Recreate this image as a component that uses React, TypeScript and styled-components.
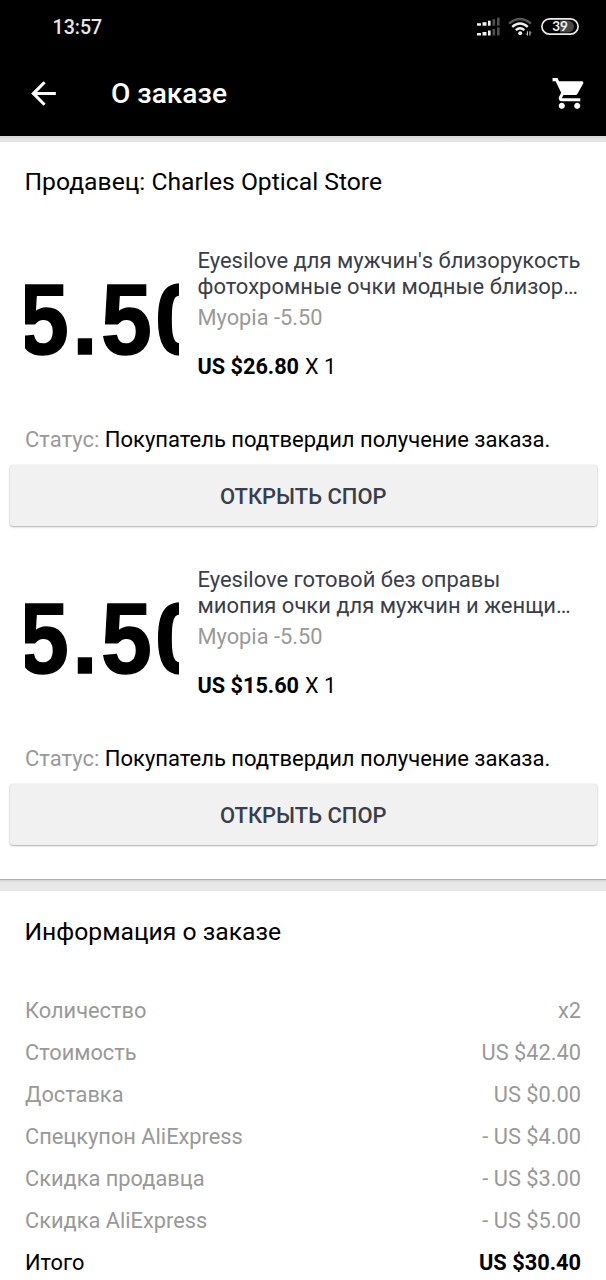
import React from 'react';
import styled, { createGlobalStyle } from 'styled-components';

const GlobalStyle = createGlobalStyle`
  *, *::before, *::after { box-sizing: border-box; }
  body {
    margin: 0;
    background: #fff;
    color: #000;
    font-family: Roboto, sans-serif;
    overflow: hidden;
  }
`;

const Screen = styled.div`
  width: 606px;
  height: 1280px;
  display: flex;
  flex-direction: column;
  overflow: hidden;
  background: #fff;
`;

const StatusBar = styled.div`
  display: flex;
  align-items: center;
  height: 54px;
  flex: none;
  padding: 0 27px 0 52.5px;
  background: #000;
`;

const Clock = styled.span`
  flex: 1;
  padding-top: 2px;
  color: #e6e6e6;
  font-size: 19.6px;
  font-weight: 500;
  line-height: 52px;
`;

const StatusIcons = styled.svg`
  display: block;
`;

const Toolbar = styled.header`
  display: flex;
  align-items: center;
  height: 82px;
  flex: none;
  padding: 0 18px 4px 25px;
  background: #000;
`;

const Title = styled.h1`
  flex: 1;
  margin: 2px 0 0 49px;
  color: #fff;
  font-size: 28.1px;
  font-weight: 500;
  line-height: 40px;
`;

const IconButton = styled.button`
  display: flex;
  padding: 0;
  border: 0;
  background: none;
  color: #fff;
`;

const TopStrip = styled.div`
  height: 6px;
  flex: none;
  background: linear-gradient(#d6d6d6, #e4e4e4 60%);
`;

const Divider = styled.div`
  height: 12px;
  flex: none;
  border-top: 1px solid #aeaeae;
  background: linear-gradient(#d6d6d6, #e8e8e8 3px);
`;

const Section = styled.section<{ $bottom?: number }>`
  flex: none;
  padding-bottom: ${(p) => p.$bottom ?? 0}px;
`;

const Heading = styled.h2<{ $height: number }>`
  margin: 0;
  padding: 0 24.5px;
  font-size: 24.7px;
  font-weight: 400;
  line-height: ${(p) => p.$height}px;
`;

const Item = styled.article`
  display: flex;
  flex-direction: column;
  height: 319px;
  padding-top: 20px;
`;

const Product = styled.div`
  display: flex;
  gap: 18.5px;
  height: 154px;
  padding-left: 25px;
`;

const Thumb = styled.div`
  width: 154px;
  height: 154px;
  flex: none;
  overflow: hidden;
  font-family: "Liberation Sans", Arial, sans-serif;
  font-size: 101px;
  font-weight: 700;
  line-height: 155px;
  white-space: nowrap;
`;

const ThumbText = styled.span`
  display: block;
  margin-left: -7px;
  letter-spacing: 3.7px;
  -webkit-text-stroke: 1.5px #000;
  transform: scaleX(0.905);
  transform-origin: 0 50%;
`;

const Details = styled.div`
  display: flex;
  flex-direction: column;
  flex: 1;
  padding-top: 6px;
  font-size: 21.97px;
`;

const Name = styled.div`
  color: #3a3e4a;
  line-height: 26px;
  white-space: pre;
`;

const Variant = styled.div`
  margin-top: 3px;
  color: #999;
  font-size: 21.8px;
  line-height: 30px;
`;

const Price = styled.div`
  display: flex;
  gap: 6px;
  margin-top: 19px;
  font-size: 21.7px;
  line-height: 30px;

  b { font-weight: 700; }
`;

const Status = styled.div`
  margin-top: 28px;
  padding: 0 25px;
  font-size: 22px;
  line-height: 31px;
  white-space: nowrap;

  span { color: #999; }
`;

const DisputeButton = styled.button`
  height: 61px;
  margin: 10px 9px 0 9.5px;
  padding: 2px 0 0;
  border: 0;
  border-radius: 3px;
  background: #f1f1f1;
  box-shadow: 0 1px 2px rgba(0, 0, 0, 0.3), 0 0 2px rgba(0, 0, 0, 0.1);
  color: #3a3e4a;
  font-family: inherit;
  font-size: 21.95px;
  font-weight: 500;
`;

const Summary = styled.dl`
  margin: 0;
  padding: 17px 25px 0;
`;

const SummaryRow = styled.div<{ $total?: boolean }>`
  display: flex;
  justify-content: space-between;
  color: ${(p) => (p.$total ? '#000' : '#999')};
  font-size: 21.8px;
  line-height: 42px;

  dd {
    margin: 0;
    font-weight: ${(p) => (p.$total ? 700 : 400)};
  }
`;

const BatteryText = styled.text`
  fill: #f0f0f0;
  font: 700 13.5px Lato, sans-serif;
`;

const items = [
  {
    name: "Eyesilove для мужчин's близорукость\nфотохромные очки модные близор…",
    variant: 'Myopia -5.50',
    price: 'US $26.80',
  },
  {
    name: 'Eyesilove готовой без оправы\nмиопия очки для мужчин и женщи…',
    variant: 'Myopia -5.50',
    price: 'US $15.60',
  },
];

const summary = [
  ['Количество', 'x2'],
  ['Стоимость', 'US $42.40'],
  ['Доставка', 'US $0.00'],
  ['Спецкупон AliExpress', '- US $4.00'],
  ['Скидка продавца', '- US $3.00'],
  ['Скидка AliExpress', '- US $5.00'],
];

const signalBars = [
  { x: 1, h: 2.5 },
  { x: 6.5, h: 3.5 },
  { x: 12, h: 5 },
  { x: 16.5, h: 6.5 },
  { x: 21, h: 8 },
];

function Indicators() {
  return (
    <StatusIcons width="103" height="20" viewBox="0 0 103 20">
      {[8.7, 18.5].map((base) =>
        signalBars.map((bar, i) => (
          <rect
            key={`${base}-${i}`}
            x={bar.x}
            y={base - bar.h}
            width={i < 2 ? 4 : 2.6}
            height={bar.h}
            fill={i < 3 ? '#f0f0f0' : '#505050'}
          />
        )),
      )}
      <g fill="none" strokeWidth="2.4">
        <path d="M33 6.7 Q44 -2.8 55 6.7" stroke="#555" />
        <path d="M36.2 9.8 Q44 3 51.8 9.8" stroke="#f0f0f0" />
        <path d="M39.8 13.2 Q44 9.4 48.4 13.2" stroke="#f0f0f0" />
      </g>
      <circle cx="44.2" cy="16.3" r="2" fill="#f0f0f0" />
      <path d="M51.4 14.2 V18.6 M53.9 14.2 V18.6" stroke="#ccc" strokeWidth="1.1" />
      <path d="M51 18 L50 16.6 M54.3 14.8 L55.4 16.2" stroke="#aaa" strokeWidth="0.8" />
      <path d="M84 3.5 H92 A6 6 0 0 1 92 15.5 H84 Z" fill="#484848" />
      <rect x="65.9" y="1.8" width="36.2" height="15.4" rx="7.7" fill="none" stroke="#ececec" strokeWidth="1.7" />
      <BatteryText x="84" y="14.4" textAnchor="middle">39</BatteryText>
    </StatusIcons>
  );
}

export default function App() {
  return (
    <Screen>
      <GlobalStyle />
      <StatusBar>
        <Clock>13:57</Clock>
        <Indicators />
      </StatusBar>
      <Toolbar>
        <IconButton aria-label="Назад">
          <svg width="37" height="37" viewBox="0 0 24 24" fill="currentColor">
            <path d="M20 11H7.83l5.59-5.59L12 4l-8 8 8 8 1.41-1.41L7.83 13H20v-2z" />
          </svg>
        </IconButton>
        <Title>О заказе</Title>
        <IconButton aria-label="Корзина">
          <svg width="37" height="37" viewBox="0 0 24 24" fill="currentColor">
            <path d="M7 18c-1.1 0-1.99.9-1.99 2S5.9 22 7 22s2-.9 2-2-.9-2-2-2zM1 2v2h2l3.6 7.59-1.35 2.45c-.16.28-.25.61-.25.96 0 1.1.9 2 2 2h12v-2H7.42c-.14 0-.25-.11-.25-.25l.03-.12.9-1.63h7.45c.75 0 1.41-.41 1.75-1.03l3.58-6.49c.08-.14.12-.31.12-.48 0-.55-.45-1-1-1H5.21l-.94-2H1zm16 16c-1.1 0-1.99.9-1.99 2s.89 2 1.99 2 2-.9 2-2-.9-2-2-2z" />
          </svg>
        </IconButton>
      </Toolbar>
      <TopStrip />
      <Section $bottom={19}>
        <Heading $height={80}>Продавец: Charles Optical Store</Heading>
        {items.map((item) => (
          <Item key={item.price}>
            <Product>
              <Thumb>
                <ThumbText>5.50</ThumbText>
              </Thumb>
              <Details>
                <Name>{item.name}</Name>
                <Variant>{item.variant}</Variant>
                <Price>
                  <b>{item.price}</b>
                  <span>X 1</span>
                </Price>
              </Details>
            </Product>
            <Status>
              <span>Статус:</span> Покупатель подтвердил получение заказа.
            </Status>
            <DisputeButton>ОТКРЫТЬ СПОР</DisputeButton>
          </Item>
        ))}
      </Section>
      <Divider />
      <Section>
        <Heading $height={82}>Информация о заказе</Heading>
        <Summary>
          {summary.map(([label, value]) => (
            <SummaryRow key={label}>
              <dt>{label}</dt>
              <dd>{value}</dd>
            </SummaryRow>
          ))}
          <SummaryRow $total>
            <dt>Итого</dt>
            <dd>US $30.40</dd>
          </SummaryRow>
        </Summary>
      </Section>
    </Screen>
  );
}
